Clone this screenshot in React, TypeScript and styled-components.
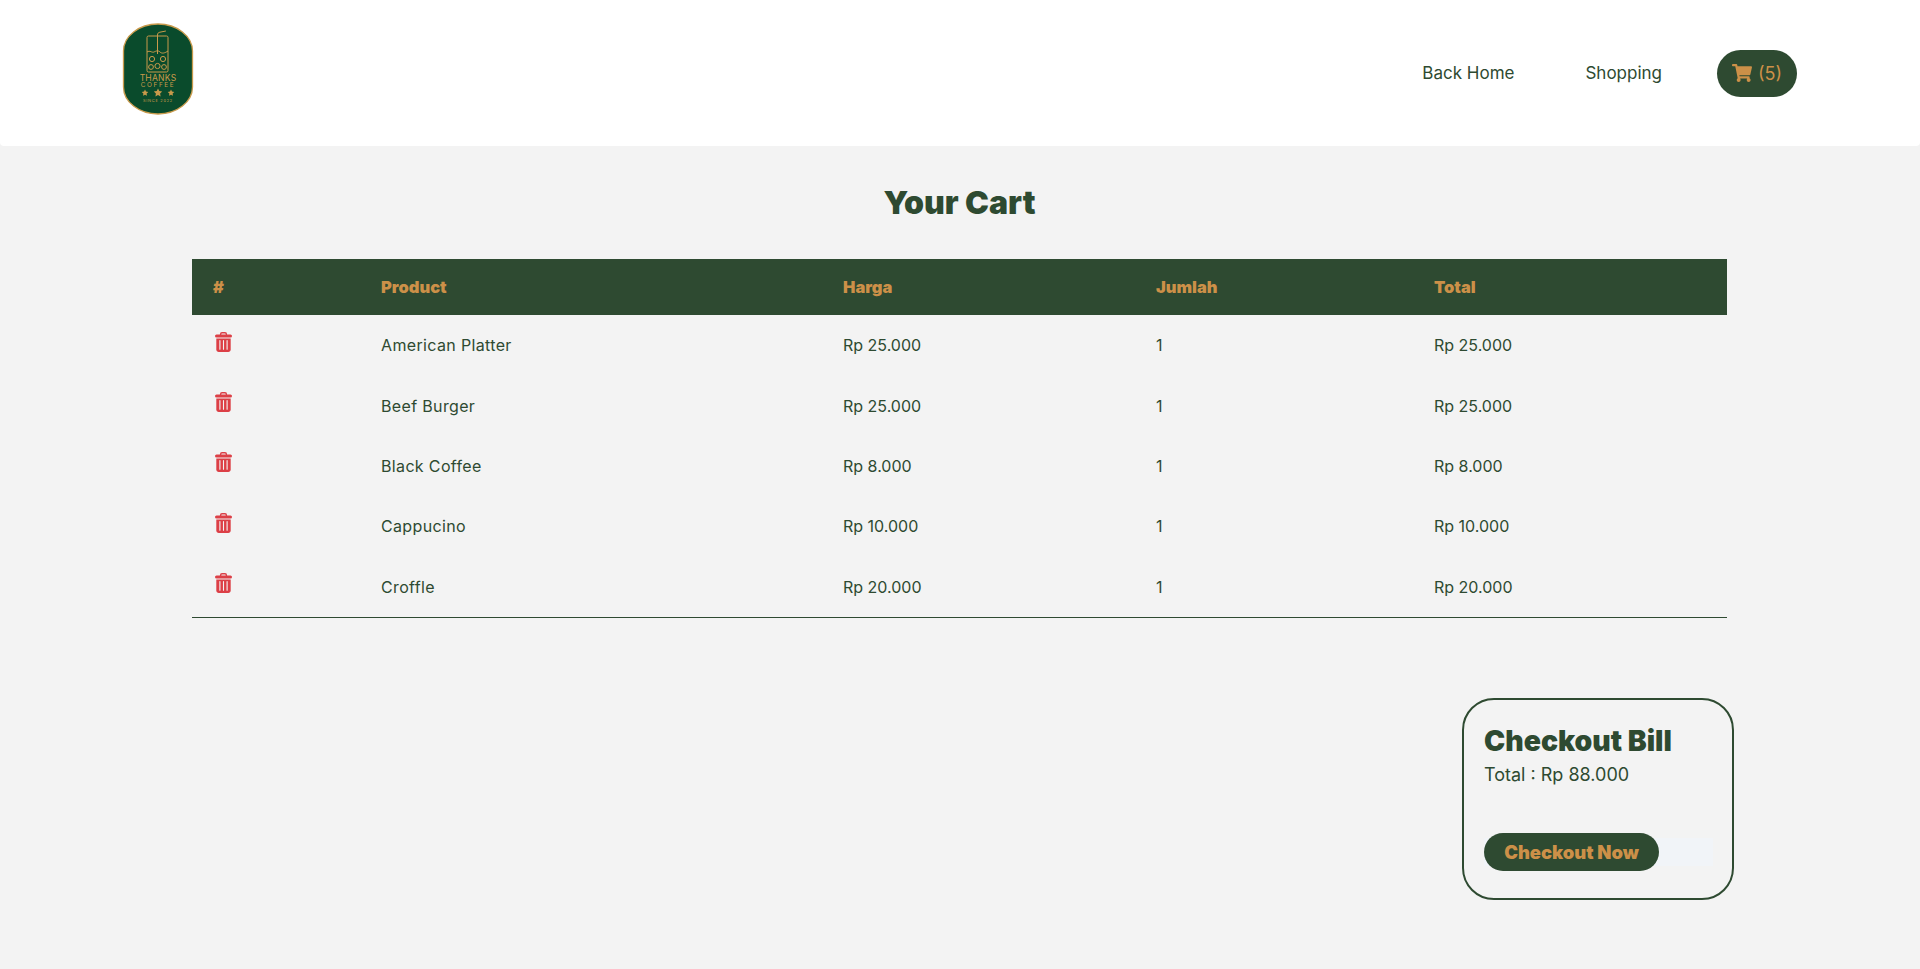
import * as React from 'react';
import styled, { createGlobalStyle } from 'styled-components';
import { FaShoppingCart } from 'react-icons/fa';

const GREEN = '#2e4a31';
const GOLD = '#cc9048';
const PAGE_BG = '#f3f3f3';
const TEXT_FONT = `Inter, "Open Sans", sans-serif`;

const CART_ITEMS = [
    { name: 'American Platter', price: 'Rp 25.000', qty: 1, total: 'Rp 25.000' },
    { name: 'Beef Burger', price: 'Rp 25.000', qty: 1, total: 'Rp 25.000' },
    { name: 'Black Coffee', price: 'Rp 8.000', qty: 1, total: 'Rp 8.000' },
    { name: 'Cappucino', price: 'Rp 10.000', qty: 1, total: 'Rp 10.000' },
    { name: 'Croffle', price: 'Rp 20.000', qty: 1, total: 'Rp 20.000' },
];

const COLUMNS = [
    { label: '#', width: 168 },
    { label: 'Product', width: 462 },
    { label: 'Harga', width: 313 },
    { label: 'Jumlah', width: 278 },
    { label: 'Total', width: 314 },
];

const GlobalStyle = createGlobalStyle`
    html, body {
        margin: 0;
        padding: 0;
        background: ${PAGE_BG};
        font-family: ${TEXT_FONT};
        color: ${GREEN};
    }
`;

const Navbar = styled.header`
    height: 146px;
    background: #fff;
    border-radius: 0 0 4px 4px;
    display: flex;
    align-items: center;
    justify-content: space-between;
    padding: 0 123px 0 122px;
`;

const LogoWrap = styled.a`
    display: block;
    line-height: 0;
    margin-top: -8px;
`;

const NavLinks = styled.nav`
    display: flex;
    align-items: center;
`;

const NavLink = styled.a`
    font-size: 17px;
    color: ${GREEN};
    margin-right: 71px;
`;

const CartPill = styled.a`
    width: 80px;
    height: 47px;
    margin-left: -16px;
    border-radius: 24px;
    background: ${GREEN};
    color: ${GOLD};
    font-size: 18px;
    display: flex;
    align-items: center;
    justify-content: center;
    gap: 6px;
    svg { width: 20px; height: 18px; }
`;

const Main = styled.main`
    padding: 0 186px 0 192px;
`;

const Title = styled.h1`
    margin: 0;
    padding-top: 39px;
    height: 74px;
    width: 1535px;
    text-align: center;
    font-size: 32px;
    line-height: 36px;
    font-weight: 900;
    color: ${GREEN};
`;

const CartTable = styled.table`
    width: 1535px;
    border-collapse: collapse;
    table-layout: fixed;
    border-bottom: 1px solid ${GREEN};
`;

const HeadCell = styled.th`
    height: 56px;
    padding: 0 0 0 21px;
    background: ${GREEN};
    color: ${GOLD};
    font-size: 16.5px;
    font-weight: 900;
    text-align: left;
`;

const Cell = styled.td<{ $wide?: boolean }>`
    height: 60.4px;
    padding: 0 0 0 21px;
    font-size: 16px;
    letter-spacing: ${(p) => (p.$wide ? '0.35px' : '0')};
    color: ${GREEN};
`;

const TrashButton = styled.svg`
    display: block;
    width: 17px;
    height: 20px;
    margin: -7px 0 0 2px;
    color: #dc3f46;
`;

const CheckoutRow = styled.section`
    display: flex;
    justify-content: flex-end;
    padding-top: 80px;
`;

const BillCard = styled.div`
    box-sizing: border-box;
    width: 272px;
    height: 202px;
    padding: 24px 20px 0;
    border: 2px solid ${GREEN};
    border-radius: 32px;
`;

const BillTitle = styled.h2`
    margin: 0;
    font-size: 28.4px;
    line-height: 34px;
    font-weight: 900;
    color: ${GREEN};
`;

const BillTotal = styled.p`
    margin: 0;
    font-size: 18px;
    line-height: 34px;
    color: ${GREEN};
`;

const ButtonTrack = styled.div`
    margin-top: 41px;
    height: 38px;
    width: 229px;
    background: linear-gradient(${PAGE_BG} 5px, #f1f4f8 5px, #f1f4f8 33px, ${PAGE_BG} 33px);
`;

const CheckoutButton = styled.a`
    display: flex;
    align-items: center;
    justify-content: center;
    width: 175px;
    height: 38px;
    border-radius: 19px;
    background: ${GREEN};
    color: ${GOLD};
    font-size: 18.4px;
    font-weight: 900;
`;

const LogoMark = () => (
    <svg width="72" height="92" viewBox="0 0 72 92" aria-label="Thanks Coffee">
        <rect x="1.5" y="1" width="69" height="90" rx="34.5" ry="27" fill="#0a4b2c" stroke="#c99a4b" strokeWidth="1.3" />
        <g fill="none" stroke="#c99a4b" strokeWidth="1">
            <rect x="25" y="13" width="21" height="36" rx="1.5" />
            <path d="M35.5 31V12c0-1.6.9-2.6 2.4-2.8l6-1.2" />
            <path d="M25 29c3-2 5 1 7 0s4-2 6 0 5 1 8-1" />
            <circle cx="30" cy="36" r="2.6" />
            <circle cx="35.5" cy="43" r="2.6" />
            <circle cx="41" cy="36" r="2.6" />
            <circle cx="29" cy="44" r="2.4" />
            <circle cx="42" cy="44" r="2.4" />
        </g>
        <g fill="#c99a4b" fontFamily={TEXT_FONT} textAnchor="middle">
            <text x="36" y="57.5" fontSize="8.6" letterSpacing="0.2">THANKS</text>
            <text x="36" y="64" fontSize="6.4" letterSpacing="1.6">COFFEE</text>
            <text x="36" y="79" fontSize="4" letterSpacing="0.7">SINCE 2022</text>
            <path d="M23 66.5l1 2.1 2.3.3-1.7 1.6.4 2.3-2-1.1-2 1.1.4-2.3-1.7-1.6 2.3-.3z" />
            <path d="M36 65.5l1.3 2.6 2.9.4-2.1 2 .5 2.9-2.6-1.4-2.6 1.4.5-2.9-2.1-2 2.9-.4z" />
            <path d="M49 66.5l1 2.1 2.3.3-1.7 1.6.4 2.3-2-1.1-2 1.1.4-2.3-1.7-1.6 2.3-.3z" />
        </g>
    </svg>
);

const TrashIcon = () => (
    <TrashButton viewBox="0 0 17 20">
        <path d="M5.6 3V2.2c0-.9.6-1.4 1.4-1.4h3c.8 0 1.4.5 1.4 1.4V3" fill="none" stroke="currentColor" strokeWidth="1.4" />
        <rect x="0" y="2.6" width="17" height="3" rx="1.5" fill="currentColor" />
        <path d="M1.3 6.6h14.4v11c0 1.4-1 2.4-2.4 2.4H3.7c-1.4 0-2.4-1-2.4-2.4z" fill="currentColor" />
        <path d="M4.9 8.6v8.6M8.5 8.6v8.6M12.1 8.6v8.6" stroke={PAGE_BG} strokeWidth="1.1" strokeLinecap="round" />
    </TrashButton>
);

export default function App() {
    return (
        <>
            <GlobalStyle />
            <Navbar>
                <LogoWrap><LogoMark /></LogoWrap>
                <NavLinks>
                    <NavLink>Back Home</NavLink>
                    <NavLink>Shopping</NavLink>
                    <CartPill><FaShoppingCart /> (5)</CartPill>
                </NavLinks>
            </Navbar>
            <Main>
                <Title>Your Cart</Title>
                <CartTable>
                    <colgroup>
                        {COLUMNS.map((c) => <col key={c.label} width={c.width} />)}
                    </colgroup>
                    <thead>
                        <tr>
                            {COLUMNS.map((c) => <HeadCell key={c.label}>{c.label}</HeadCell>)}
                        </tr>
                    </thead>
                    <tbody>
                        {CART_ITEMS.map((i) => (
                            <tr key={i.name}>
                                <Cell><TrashIcon /></Cell>
                                <Cell $wide>{i.name}</Cell>
                                <Cell>{i.price}</Cell>
                                <Cell>{i.qty}</Cell>
                                <Cell>{i.total}</Cell>
                            </tr>
                        ))}
                    </tbody>
                </CartTable>
                <CheckoutRow>
                    <BillCard>
                        <BillTitle>Checkout Bill</BillTitle>
                        <BillTotal>Total : Rp 88.000</BillTotal>
                        <ButtonTrack>
                            <CheckoutButton>Checkout Now</CheckoutButton>
                        </ButtonTrack>
                    </BillCard>
                </CheckoutRow>
            </Main>
        </>
    );
}
